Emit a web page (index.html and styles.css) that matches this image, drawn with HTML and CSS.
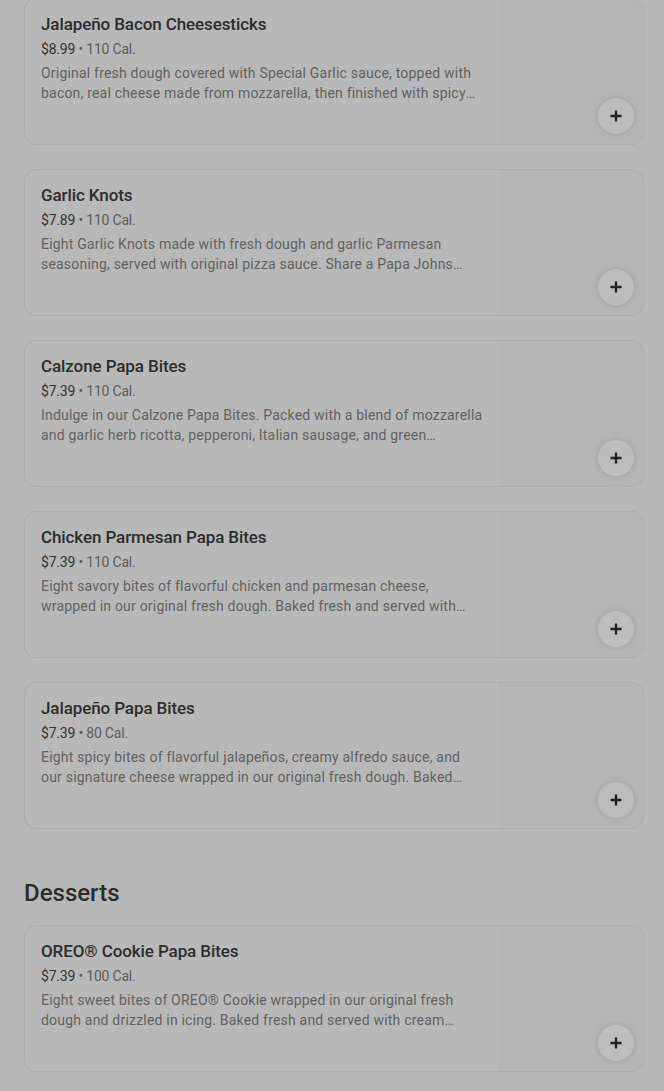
FILE: index.html
```html
<!DOCTYPE html>
<html lang="en">
<head>
<meta charset="utf-8">
<title>Menu</title>
<link rel="stylesheet" href="styles.css">
</head>
<body>
<main class="menu">
  <section class="items">
    <article class="card">
      <div class="info">
        <h3 class="name">Jalapeño Bacon Cheesesticks</h3>
        <p class="meta"><span class="price">$8.99</span> • 110 Cal.</p>
        <p class="desc">Original fresh dough covered with Special Garlic sauce, topped with bacon, real cheese made from mozzarella, then finished with spicy jalapeños and served with a dipping sauce.</p>
      </div>
      <div class="thumb"></div>
      <button class="add" aria-label="Add"><svg viewBox="0 0 14 14" width="14" height="14"><path d="M7 1.5v11M1.5 7h11" stroke="#222" stroke-width="2.4" fill="none"/></svg></button>
    </article>
    <article class="card">
      <div class="info">
        <h3 class="name">Garlic Knots</h3>
        <p class="meta"><span class="price">$7.89</span> • 110 Cal.</p>
        <p class="desc">Eight Garlic Knots made with fresh dough and garlic Parmesan seasoning, served with original pizza sauce. Share a Papa Johns side with the whole table.</p>
      </div>
      <div class="thumb"></div>
      <button class="add" aria-label="Add"><svg viewBox="0 0 14 14" width="14" height="14"><path d="M7 1.5v11M1.5 7h11" stroke="#222" stroke-width="2.4" fill="none"/></svg></button>
    </article>
    <article class="card">
      <div class="info">
        <h3 class="name">Calzone Papa Bites</h3>
        <p class="meta"><span class="price">$7.39</span> • 110 Cal.</p>
        <p class="desc">Indulge in our Calzone Papa Bites. Packed with a blend of mozzarella and garlic herb ricotta, pepperoni, Italian sausage, and green peppers, wrapped in our original fresh dough.</p>
      </div>
      <div class="thumb"></div>
      <button class="add" aria-label="Add"><svg viewBox="0 0 14 14" width="14" height="14"><path d="M7 1.5v11M1.5 7h11" stroke="#222" stroke-width="2.4" fill="none"/></svg></button>
    </article>
    <article class="card">
      <div class="info">
        <h3 class="name">Chicken Parmesan Papa Bites</h3>
        <p class="meta"><span class="price">$7.39</span> • 110 Cal.</p>
        <p class="desc">Eight savory bites of flavorful chicken and parmesan cheese, wrapped in our original fresh dough. Baked fresh and served with marinara sauce for dipping.</p>
      </div>
      <div class="thumb"></div>
      <button class="add" aria-label="Add"><svg viewBox="0 0 14 14" width="14" height="14"><path d="M7 1.5v11M1.5 7h11" stroke="#222" stroke-width="2.4" fill="none"/></svg></button>
    </article>
    <article class="card">
      <div class="info">
        <h3 class="name">Jalapeño Papa Bites</h3>
        <p class="meta"><span class="price">$7.39</span> • 80 Cal.</p>
        <p class="desc">Eight spicy bites of flavorful jalapeños, creamy alfredo sauce, and our signature cheese wrapped in our original fresh dough. Baked fresh and served with ranch.</p>
      </div>
      <div class="thumb"></div>
      <button class="add" aria-label="Add"><svg viewBox="0 0 14 14" width="14" height="14"><path d="M7 1.5v11M1.5 7h11" stroke="#222" stroke-width="2.4" fill="none"/></svg></button>
    </article>
  </section>

  <h2 class="section-title">Desserts</h2>

  <section class="items">
    <article class="card">
      <div class="info">
        <h3 class="name">OREO® Cookie Papa Bites</h3>
        <p class="meta"><span class="price">$7.39</span> • 100 Cal.</p>
        <p class="desc">Eight sweet bites of OREO® Cookie wrapped in our original fresh dough and drizzled in icing. Baked fresh and served with cream cheese icing for dipping.</p>
      </div>
      <div class="thumb"></div>
      <button class="add" aria-label="Add"><svg viewBox="0 0 14 14" width="14" height="14"><path d="M7 1.5v11M1.5 7h11" stroke="#222" stroke-width="2.4" fill="none"/></svg></button>
    </article>
  </section>
</main>
</body>
</html>
```
FILE: styles.css
```css
* { box-sizing: border-box; }

html, body {
  margin: 0;
  padding: 0;
  background: #b8b8b8;
}

body {
  font-family: Roboto, "Noto Sans", sans-serif;
  color: #2a2a2a;
}

.menu {
  padding: 0 20px 40px 24px;
  margin-top: -2px;
}

.items {
  display: flex;
  flex-direction: column;
  gap: 24px;
}

.card {
  position: relative;
  display: grid;
  grid-template-columns: 1fr 144px;
  height: 147px;
  border: 1px solid #acacac;
  border-radius: 12px;
  overflow: hidden;
}

.info {
  padding: 15px 16px 0 16px;
  min-width: 0;
}

.name {
  margin: 0;
  font-size: 17px;
  line-height: 20px;
  font-weight: 500;
  color: #2c2c2c;
  letter-spacing: -0.1px;
}

.meta {
  margin: 5px 0 0;
  font-size: 14px;
  line-height: 20px;
  color: #5c5c5c;
  letter-spacing: -0.2px;
}

.price {
  color: #333;
}

.desc {
  margin: 4px 0 0;
  font-size: 14px;
  line-height: 20px;
  color: #616161;
  letter-spacing: 0.2px;
  display: -webkit-box;
  -webkit-line-clamp: 2;
  -webkit-box-orient: vertical;
  overflow: hidden;
}

.thumb {
  background: #b5b5b5;
  border-left: 1px solid #b3b3b3;
}

.add {
  position: absolute;
  right: 9px;
  bottom: 10px;
  width: 36px;
  height: 36px;
  border-radius: 50%;
  border: none;
  padding: 0;
  background: #bdbdbd;
  box-shadow: 0 0 6px rgba(0, 0, 0, 0.12);
  display: flex;
  align-items: center;
  justify-content: center;
}

.section-title {
  margin: 48px 0 16px;
  font-size: 24px;
  line-height: 32px;
  font-weight: 500;
  color: #2c2c2c;
  letter-spacing: 0;
}
```
